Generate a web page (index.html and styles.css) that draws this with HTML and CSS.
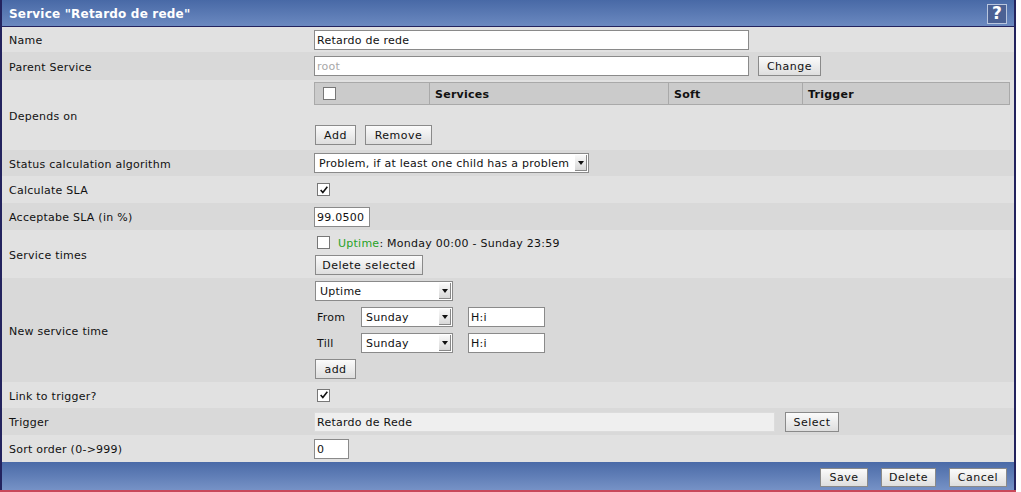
FILE: index.html
```html
<!DOCTYPE html>
<html>
<head>
<meta charset="utf-8">
<link rel="stylesheet" href="styles.css">
</head>
<body>
<div class="panel">
  <div class="head">
    <span class="title">Service "Retardo de rede"</span>
    <span class="help">?</span>
  </div>
  <div class="rows">
    <div class="row light h25">
      <div class="lbl">Name</div>
      <div class="val"><input class="txt w435" value="Retardo de rede"></div>
    </div>
    <div class="row dark h28">
      <div class="lbl">Parent Service</div>
      <div class="val gap9"><input class="txt w435 dim" value="root"><button class="btn w63">Change</button></div>
    </div>
    <div class="row light h70">
      <div class="lbl">Depends on</div>
      <div class="val col deps">
        <div class="dtable">
          <div class="dh c1"><span class="cb"></span></div>
          <div class="dh c2">Services</div>
          <div class="dh c3">Soft</div>
          <div class="dh c4">Trigger</div>
        </div>
        <div class="btns"><button class="btn w41">Add</button><button class="btn w67">Remove</button></div>
      </div>
    </div>
    <div class="row dark h26">
      <div class="lbl">Status calculation algorithm</div>
      <div class="val"><span class="sel w275"><span class="stext">Problem, if at least one child has a problem</span><span class="arr"></span></span></div>
    </div>
    <div class="row light h27">
      <div class="lbl">Calculate SLA</div>
      <div class="val"><span class="cb chk"><svg viewBox="0 0 12 12" width="10" height="10"><path d="M2 6 L4.6 9 L10 2" fill="none" stroke="#111" stroke-width="1.9"/></svg></span></div>
    </div>
    <div class="row dark h27">
      <div class="lbl">Acceptabe SLA (in %)</div>
      <div class="val"><input class="txt w56" value="99.0500"></div>
    </div>
    <div class="row light h48">
      <div class="lbl">Service times</div>
      <div class="val col st">
        <div class="line"><span class="cb"></span><span class="uptxt"><span class="green">Uptime</span>: Monday 00:00 - Sunday 23:59</span></div>
        <button class="btn w108">Delete selected</button>
      </div>
    </div>
    <div class="row dark h104">
      <div class="lbl">New service time</div>
      <div class="val col nst">
        <span class="sel w138"><span class="stext">Uptime</span><span class="arr"></span></span>
        <div class="line"><span class="sl">From</span><span class="sel w92"><span class="stext">Sunday</span><span class="arr"></span></span><input class="txt w77 ml15" value="H:i"></div>
        <div class="line"><span class="sl">Till</span><span class="sel w92"><span class="stext">Sunday</span><span class="arr"></span></span><input class="txt w77 ml15" value="H:i"></div>
        <button class="btn w41">add</button>
      </div>
    </div>
    <div class="row light h26">
      <div class="lbl">Link to trigger?</div>
      <div class="val"><span class="cb chk"><svg viewBox="0 0 12 12" width="10" height="10"><path d="M2 6 L4.6 9 L10 2" fill="none" stroke="#111" stroke-width="1.9"/></svg></span></div>
    </div>
    <div class="row dark h27">
      <div class="lbl">Trigger</div>
      <div class="val gap10"><input class="txt w461 ro" value="Retardo de Rede" readonly><button class="btn w54">Select</button></div>
    </div>
    <div class="row light h27">
      <div class="lbl">Sort order (0-&gt;999)</div>
      <div class="val"><input class="txt w35" value="0"></div>
    </div>
  </div>
  <div class="foot">
    <button class="btn w48">Save</button>
    <button class="btn w55">Delete</button>
    <button class="btn w58">Cancel</button>
  </div>
</div>
<div class="redline"></div>
</body>
</html>
```
FILE: styles.css
```css
* { box-sizing: border-box; }
html, body { margin: 0; padding: 0; background: #fff; }
body { font-family: "DejaVu Sans", Verdana, sans-serif; font-size: 11px; color: #111; letter-spacing: 0.25px; }

.panel {
  width: 1016px;
  border-left: 2px solid #23235e;
  border-right: 2px solid #23235e;
}
.head {
  height: 27px;
  background: linear-gradient(#4869a6, #6b89c0);
  border-bottom: 1px solid #23235e;
  display: flex;
  align-items: center;
  justify-content: space-between;
  padding: 1px 7px 0 7px;
}
.title { color: #fff; font-weight: bold; font-size: 12px; letter-spacing: 0.2px; }
.help {
  width: 20px; height: 20px;
  border: 1px solid #b9c6de;
  background: #4b6194;
  color: #fff;
  font-weight: bold;
  font-size: 17px;
  display: flex; align-items: center; justify-content: center;
  line-height: 1;
  letter-spacing: 0;
}

.row { display: flex; align-items: center; }
.light { background: #e1e1e1; }
.dark { background: #d9d9d9; }
.h25 { height: 25px; }
.h26 { height: 26px; }
.h27 { height: 27px; }
.h28 { height: 28px; }
.h48 { height: 48px; }
.h70 { height: 70px; }
.h104 { height: 104px; }

.lbl { width: 312px; padding-left: 7px; padding-top: 2px; flex: none; }
.val { display: flex; align-items: center; }
.col { flex-direction: column; align-items: flex-start; align-self: stretch; }
.gap9 { gap: 9px; }
.gap10 { gap: 10px; }

.txt {
  height: 20px;
  border: 1px solid #8a8a8a;
  background: #fff;
  font-family: "DejaVu Sans", Verdana, sans-serif;
  font-size: 11px;
  letter-spacing: 0.25px;
  color: #111;
  padding: 1px 2px 0;
  margin: 0;
  outline: none;
}
.dim { color: #a8a8a8; }
.ro { background: #efefef; border-color: #dcdcdc; }
.w35 { width: 35px; }
.w56 { width: 56px; }
.w77 { width: 77px; }
.w435 { width: 435px; }
.w461 { width: 461px; }
.ml15 { margin-left: 15px; }

.btn {
  height: 20px;
  border: 1px solid #8a8a8a;
  background: linear-gradient(#fbfbfb, #dedede);
  font-family: "DejaVu Sans", Verdana, sans-serif;
  font-size: 11px;
  color: #111;
  padding: 1px 0 0;
  margin: 0;
  letter-spacing: 0.5px;
}
.w41 { width: 41px; }
.w48 { width: 48px; }
.w54 { width: 54px; }
.w55 { width: 55px; }
.w58 { width: 58px; }
.w63 { width: 63px; }
.w67 { width: 67px; }
.w108 { width: 108px; }

.sel {
  position: relative;
  display: flex;
  align-items: center;
  height: 20px;
  border: 1px solid #8a8a8a;
  background: #fff;
  padding-left: 4px;
  padding-top: 1px;
}
.w92 { width: 92px; }
.w138 { width: 138px; }
.w275 { width: 275px; }
.arr {
  position: absolute;
  right: 1px; top: 1px;
  width: 12px; height: 16px;
  background: linear-gradient(#fafafa, #d8d8d8);
  border-right: 1px solid #888;
  border-bottom: 1px solid #888;
}
.arr::after {
  content: "";
  position: absolute;
  left: 3px; top: 6px;
  border-left: 3px solid transparent;
  border-right: 3px solid transparent;
  border-top: 4px solid #111;
}

.cb {
  display: inline-flex;
  align-items: center;
  justify-content: center;
  width: 13px; height: 13px;
  border: 1px solid #777;
  background: #fff;
  margin-left: 3px;
}

.deps { padding-top: 2px; }
.dtable {
  display: flex;
  width: 696px;
  height: 23px;
  border: 1px solid #a9a9a9;
  background: #cbcbcb;
}
.dh { display: flex; align-items: center; font-weight: bold; border-right: 1px solid #a9a9a9; padding-left: 5px; padding-top: 1px; }
.dh:last-child { border-right: none; }
.c1 { width: 115px; padding-left: 8px; padding-top: 0; }
.c1 .cb { margin-left: 0; }
.c2 { width: 239px; }
.c3 { width: 134px; }
.c4 { flex: 1; }
.btns { display: flex; gap: 9px; margin-top: 20px; padding-left: 1px; }

.st { padding-top: 2px; gap: 3px; }
.st .line { display: flex; align-items: center; height: 20px; }
.uptxt { margin-left: 8px; padding-top: 2px; }
.green { color: #27a327; }
.st .btn, .nst .btn { margin-left: 1px; }

.nst { padding-top: 3px; gap: 6px; }
.nst > .sel { margin-left: 1px; }
.nst .line { display: flex; align-items: center; height: 20px; }
.sl { width: 47px; padding-left: 3px; padding-top: 1px; }

.foot {
  height: 28px;
  background: linear-gradient(#4a6aa7, #7692c6);
  display: flex;
  align-items: center;
  justify-content: flex-end;
  gap: 13px;
  padding-right: 7px;
  padding-top: 2px;
}
.foot .btn { height: 19px; }
.redline { width: 1016px; height: 2px; background: #c8485a; }
```
